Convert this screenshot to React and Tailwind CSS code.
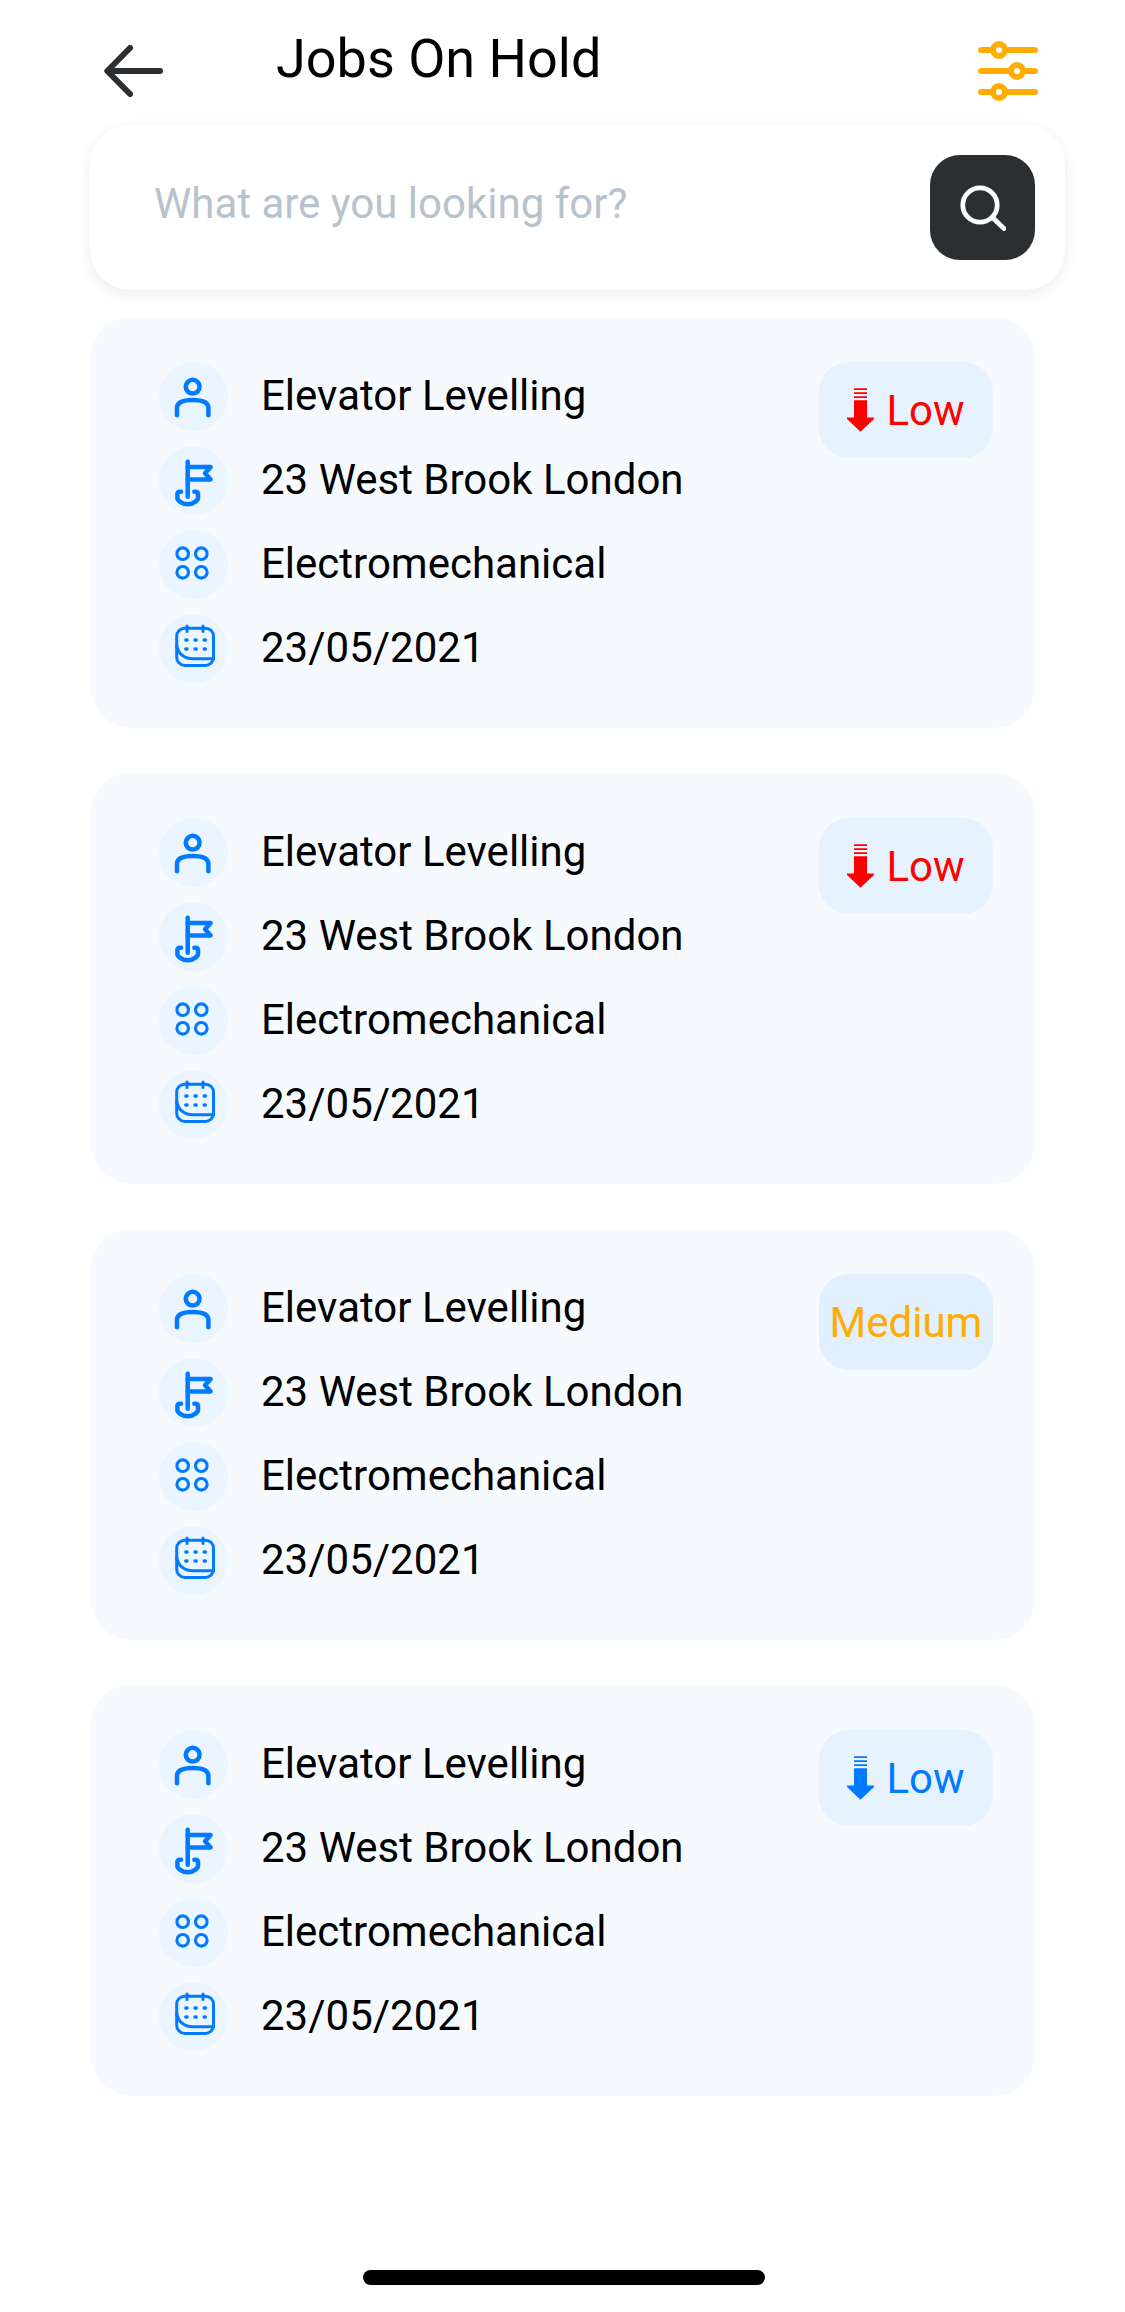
const strokeProps = {
  fill: "none",
  stroke: "currentColor",
  strokeLinecap: "round",
  strokeLinejoin: "round",
};

function PersonIcon() {
  return (
    <svg viewBox="0 0 69 69" className="size-full" strokeWidth="4.5" {...strokeProps} aria-hidden="true">
      <circle cx="33.7" cy="24.7" r="6.9" />
      <path d="M18 53.2V46C18 40.5 24.5 38 33.7 38S49.4 40.5 49.4 46V53.2" />
    </svg>
  );
}

function FlagIcon() {
  return (
    <svg viewBox="0 0 69 69" className="size-full" strokeWidth="4.5" {...strokeProps} aria-hidden="true">
      <path d="M28.7 15.8V50.8" />
      <path d="M28.7 20.9H51.6L46 27.2L51.6 33.4H28.7" />
      <path d="M22 45.7H21Q18.4 45.7 18.4 48.5V52C18.4 54 22.5 58.2 28.7 58.2S39 54 39 52V48.5Q39 45.7 36.4 45.7H35.4" />
    </svg>
  );
}

function GridIcon() {
  return (
    <svg viewBox="0 0 69 69" className="size-full" strokeWidth="3.1" {...strokeProps} aria-hidden="true">
      <circle cx="23.7" cy="23.7" r="5.8" />
      <circle cx="42.3" cy="23.7" r="5.8" />
      <circle cx="23.7" cy="42.3" r="5.8" />
      <circle cx="42.3" cy="42.3" r="5.8" />
    </svg>
  );
}

function CalendarIcon() {
  return (
    <svg viewBox="0 0 69 69" className="size-full" strokeWidth="3" {...strokeProps} aria-hidden="true">
      <rect x="17.7" y="14.2" width="36.8" height="37.2" rx="8" />
      <path d="M28 12V17.5M44 12V17.5" />
      <path d="M17.7 31C18.5 39 25 44.7 33.5 44.7H54.5" />
      <path d="M26.8 26H28M36 26H37.2M45.2 26H46.4M26.8 35H28M36 35H37.2M45.2 35H46.4" strokeWidth="3.4" />
    </svg>
  );
}

function LowArrowIcon() {
  return (
    <svg viewBox="0 0 27 44" className="h-11 w-[27px]" fill="currentColor" aria-hidden="true">
      <path d="M7 0.3H20V2H7zM7 4.3H20V6H7zM7 8.3H20V10H7z" />
      <path d="M7 12.3H20V29.6H27V31L13.5 43.8L0 31V29.6H7z" />
    </svg>
  );
}

const ROWS = [
  { key: "title", label: "Job", Icon: PersonIcon },
  { key: "address", label: "Address", Icon: FlagIcon },
  { key: "category", label: "Category", Icon: GridIcon },
  { key: "date", label: "Date", Icon: CalendarIcon },
];

const BADGES = {
  lowRed: { text: "Low", arrow: true, style: "bg-[#e7f2ff] text-[#ff0000]" },
  medium: { text: "Medium", arrow: false, style: "bg-[#e1efff] text-[#ffad00]" },
  lowBlue: { text: "Low", arrow: true, style: "bg-[#e7f2ff] text-[#007aff]" },
};

const job = {
  title: "Elevator Levelling",
  address: "23 West Brook London",
  category: "Electromechanical",
  date: "23/05/2021",
};

const JOBS = [
  { id: 1, ...job, badge: "lowRed" },
  { id: 2, ...job, badge: "lowRed" },
  { id: 3, ...job, badge: "medium" },
  { id: 4, ...job, badge: "lowBlue" },
];

function JobCard({ job }) {
  const badge = BADGES[job.badge];
  return (
    <li className="flex items-start justify-between rounded-[40px] bg-[#f6faff] pt-[45px] pr-[42px] pb-[45px] pl-[68px]">
      <ul className="flex flex-col gap-[15px]">
        {ROWS.map(({ key, label, Icon }) => (
          <li key={key} className="flex items-center gap-[33px]">
            <span role="img" aria-label={label} className="size-[69px] shrink-0 rounded-full bg-[#ebf5ff] text-[#007aff]">
              <Icon />
            </span>
            <span className="pb-0.5 text-[42px] leading-[50px] text-black">{job[key]}</span>
          </li>
        ))}
      </ul>
      <div className={`flex h-24 w-[174px] shrink-0 items-center justify-center gap-3 rounded-[30px] text-[42px] leading-[50px] ${badge.style}`}>
        {badge.arrow && <LowArrowIcon />}
        <span className="pt-0.5">{badge.text}</span>
      </div>
    </li>
  );
}

export default function App() {
  return (
    <div className="flex min-h-screen flex-col bg-white font-[Roboto,sans-serif]">
      <header className="flex items-center pt-[27px] pr-[87px] pb-[10px] pl-[104px]">
        <button type="button" aria-label="Back" className="flex h-[88px] w-[60px] items-center text-[#2b2f32]">
          <svg viewBox="0 0 60 54" className="h-[54px] w-[60px]" strokeWidth="6" {...strokeProps} aria-hidden="true">
            <path d="M56 27H4M26 4L3.3 27L26 50" />
          </svg>
        </button>
        <h1 className="mb-6 ml-28 flex-1 text-[54px] leading-[64px] text-black">Jobs On Hold</h1>
        <button type="button" aria-label="Filter" className="text-[#ffad00]">
          <svg viewBox="0 0 60 60" className="size-[60px]" strokeWidth="6" {...strokeProps} aria-hidden="true">
            <path d="M3 9H15M27 9H57M3 30H33M45 30H57M3 51H15M27 51H57" />
            <circle cx="21" cy="9" r="6" />
            <circle cx="39" cy="30" r="6" />
            <circle cx="21" cy="51" r="6" />
          </svg>
        </button>
      </header>

      <form
        role="search"
        onSubmit={(e) => e.preventDefault()}
        className="mr-[60px] ml-[90px] flex items-center rounded-[40px] bg-white py-[30px] pr-[30px] pl-16 shadow-[0_4px_16px_rgba(0,0,0,0.08)]"
      >
        <input
          type="text"
          aria-label="Search jobs"
          placeholder="What are you looking for?"
          className="min-w-0 flex-1 pb-2 text-[42px] leading-[50px] text-black outline-none placeholder:text-[#b8c2cc]"
        />
        <button type="submit" aria-label="Search" className="flex size-[105px] items-center justify-center rounded-[30px] bg-[#2b2f32] text-white">
          <svg viewBox="0 0 47 47" className="size-[47px]" strokeWidth="4.8" {...strokeProps} aria-hidden="true">
            <circle cx="21" cy="21" r="17.2" />
            <path d="M33.5 33.5L45 44.5" />
          </svg>
        </button>
      </form>

      <main className="mt-[27px] mr-[90px] ml-[91px]">
        <ul className="flex flex-col gap-[45px]">
          {JOBS.map((item) => (
            <JobCard key={item.id} job={item} />
          ))}
        </ul>
      </main>

      <div className="mt-auto flex justify-center pt-[45px] pb-[27px] pl-[3px]">
        <div className="h-[15px] w-[402px] rounded-full bg-black" />
      </div>
    </div>
  );
}
